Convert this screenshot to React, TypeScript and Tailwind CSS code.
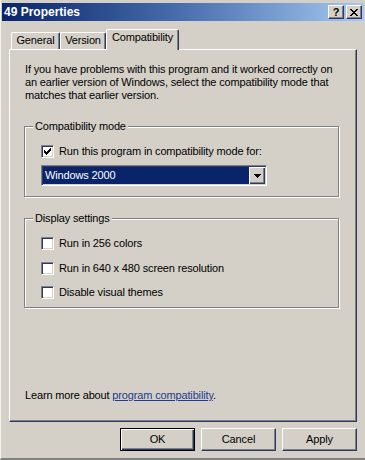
import React from "react";

const raised =
  "bg-[#d4d0c8] border border-t-white border-l-white border-r-[#2f3766] border-b-[#2f3766] shadow-[inset_-1px_-1px_0_#808080]";
const sunken =
  "border border-t-[#808080] border-l-[#808080] border-r-white border-b-white shadow-[inset_1px_1px_0_#2f3766,inset_-1px_-1px_0_#d4d0c8]";

function Check() {
  // classic 7x7 check mark
  const px: [number, number, number][] = [
    [6, 0, 1],
    [5, 1, 2],
    [0, 2, 1],
    [4, 2, 3],
    [0, 3, 2],
    [3, 3, 3],
    [0, 4, 5],
    [1, 5, 3],
    [2, 6, 1],
  ];
  return (
    <svg width="7" height="7" viewBox="0 0 7 7" shapeRendering="crispEdges">
      {px.map(([x, y, w], i) => (
        <rect key={i} x={x} y={y} width={w} height={1} fill="#000" />
      ))}
    </svg>
  );
}

function CheckBox({ label, checked }: { label: string; checked?: boolean }) {
  return (
    <div className="flex items-center gap-[5px] h-[13px]">
      <div className={`w-[13px] h-[13px] bg-white flex items-center justify-center shrink-0 ${sunken}`}>
        {checked && <Check />}
      </div>
      <span className="leading-[13px] whitespace-nowrap">{label}</span>
    </div>
  );
}

function Group({ title, className, children }: { title: string; className: string; children: React.ReactNode }) {
  return (
    <div
      className={`relative -ml-[1px] w-[315px] border border-[#808080] shadow-[inset_1px_1px_0_#fff,1px_1px_0_#fff] pl-[16px] ${className}`}
    >
      <span className="absolute -top-[7px] left-[8px] px-[2px] bg-[#d4d0c8] leading-[13px] whitespace-nowrap">
        {title}
      </span>
      {children}
    </div>
  );
}

function Tab({ label, w, active }: { label: string; w: string; active?: boolean }) {
  return (
    <div
      className={`${w} ${
        active ? "h-[21px] -mb-px relative z-10" : "h-[17px]"
      } bg-[#d4d0c8] border-t border-l border-r border-t-white border-l-white border-r-[#2f3766] shadow-[inset_-1px_0_0_#808080] rounded-t-[2px] flex justify-center pt-[1px] leading-[13px] whitespace-nowrap`}
    >
      {label}
    </div>
  );
}

export default function App() {
  return (
    <div className="w-[365px] h-[460px] bg-[#d4d0c8] flex flex-col border-l border-l-[#f4f3ef] border-b-2 border-b-[#808080] font-['Liberation_Sans',Arial,sans-serif] text-[11px] tracking-[-0.15px] text-black overflow-hidden">
      {/* title bar */}
      <div className="mt-[3px] mx-[1px] h-[18px] flex items-center pl-[2px] pr-[2px] bg-linear-to-r from-[#0a246a] via-[#4a6fae] to-[#a6caf0]">
        <span className="flex-1 text-white font-bold text-[12px] tracking-normal leading-[18px]">49 Properties</span>
        <div className="flex gap-[2px]">
          <div className={`w-[16px] h-[14px] flex items-center justify-center font-bold text-[11px] leading-none ${raised}`}>
            ?
          </div>
          <div className={`w-[16px] h-[14px] flex items-center justify-center ${raised}`}>
            <svg width="8" height="7" viewBox="0 0 8 7" shapeRendering="crispEdges">
              <path d="M0 0h2v1H0zM6 0h2v1H6zM1 1h2v1H1zM5 1h2v1H5zM2 2h4v1H2zM3 3h2v1H3zM2 4h4v1H2zM1 5h2v1H1zM5 5h2v1H5zM0 6h2v1H0zM6 6h2v1H6z" fill="#000" />
            </svg>
          </div>
        </div>
      </div>

      {/* tabs */}
      <div className="mt-[8px] mx-[8px] flex flex-col">
        <div className="flex items-end h-[20px] pl-[2px]">
          <Tab label="General" w="w-[49px]" />
          <Tab label="Version" w="w-[46px]" />
          <Tab label="Compatibility" w="w-[73px]" active />
        </div>
        <div className="h-[373px] border border-t-white border-l-white border-r-[#2f3766] border-b-[#2f3766] shadow-[inset_-1px_-1px_0_#808080] flex flex-col px-[15px] pt-[13px] pb-[19px]">
          <p className="leading-[13px] whitespace-nowrap">
            If you have problems with this program and it worked correctly on
            <br />
            an earlier version of Windows, select the compatibility mode that
            <br />
            matches that earlier version.
          </p>

          <Group title="Compatibility mode" className="mt-[24px] pt-[18px] pb-[10px]">
            <CheckBox label="Run this program in compatibility mode for:" checked />
            <div className={`mt-[7px] w-[226px] h-[21px] flex p-[1px] bg-white ${sunken}`}>
              <div className="flex-1 bg-[#0a246a] text-white pl-[2px] flex items-center leading-[13px]">
                Windows 2000
              </div>
              <div className={`w-[16px] h-[17px] flex items-center justify-center bg-[#d4d0c8] shadow-[inset_1px_1px_0_#fff,inset_-1px_-1px_0_#2f3766,inset_-2px_-2px_0_#808080]`}>
                <svg width="7" height="4" viewBox="0 0 7 4" shapeRendering="crispEdges">
                  <path d="M0 0h7v1H0zM1 1h5v1H1zM2 2h3v1H2zM3 3h1v1H3z" fill="#000" />
                </svg>
              </div>
            </div>
          </Group>

          <Group title="Display settings" className="mt-[21px] pt-[18px] pb-[8px] flex flex-col gap-[11.5px]">
            <CheckBox label="Run in 256 colors" />
            <CheckBox label="Run in 640 x 480 screen resolution" />
            <CheckBox label="Disable visual themes" />
          </Group>

          <p className="mt-auto leading-[13px] whitespace-nowrap">
            Learn more about{" "}
            <a href="#" className="text-[#1f3a8e] underline">
              program compatibility
            </a>
            .
          </p>
        </div>
      </div>

      {/* buttons */}
      <div className="mt-[6px] mr-[8px] flex justify-end gap-[6px]">
        <button className="w-[75px] h-[23px] bg-[#d4d0c8] border border-black shadow-[inset_1px_1px_0_#fff,inset_-1px_-1px_0_#2f3766,inset_-2px_-2px_0_#808080] leading-[13px]">
          OK
        </button>
        <button className={`w-[75px] h-[23px] leading-[13px] ${raised}`}>Cancel</button>
        <button className={`w-[75px] h-[23px] leading-[13px] ${raised}`}>Apply</button>
      </div>
    </div>
  );
}
